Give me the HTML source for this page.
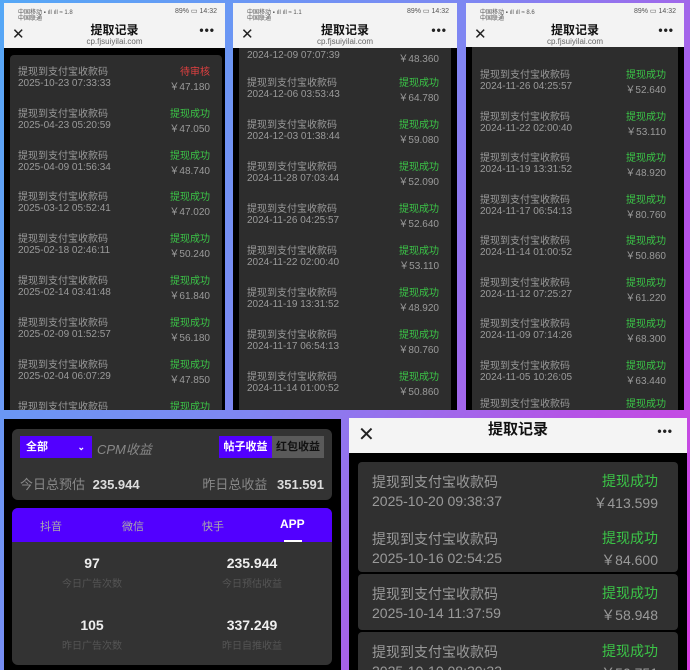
<!DOCTYPE html>
<html><head><meta charset="utf-8"><style>
*{margin:0;padding:0;box-sizing:border-box}
body{width:690px;height:670px;overflow:hidden;position:relative;font-family:"Liberation Sans","Noto Sans CJK SC",sans-serif;background:linear-gradient(120deg,#55a8f6 0%,#7f86f2 45%,#b455e6 75%,#d83ee0 100%)}
.p{position:absolute;background:#000;overflow:hidden}
.hd{position:absolute;left:0;right:0;top:0;background:#f3f3f3}
.sb{position:absolute;top:4px;font-size:6px;color:#555}
.tt{position:absolute;left:0;right:0;top:18px;text-align:center;font-size:12px;font-weight:bold;color:#111}
.url{position:absolute;left:0;right:0;top:34px;text-align:center;font-size:8px;color:#666}
.x{position:absolute;left:8px;top:22px;font-size:15px;color:#222}
.dots{position:absolute;right:10px;top:20px;font-size:12px;font-weight:bold;color:#222;letter-spacing:1px}
.card{position:absolute;background:#2d2d2d;border-radius:4px}
.r{position:absolute;left:0;right:0;font-size:10px;color:#9a9a9a}
.r .a{position:absolute;left:8px;top:0}
.r .s{position:absolute;right:12px;top:0;color:#3bc447}
.r .s.pd{color:#e04040}
.r .d{position:absolute;left:8px;top:15px}
.r .m{position:absolute;right:12px;top:15px}
.big .r{font-size:14px}
.big .r .a{left:14px}.big .r .d{left:14px;top:21px}.big .r .s{right:20px;top:-1px}.big .r .m{right:20px;top:21px}
</style></head><body>

<!-- panel 1 -->
<div class="p" style="left:4px;top:3px;width:221px;height:407px">
<div class="hd" style="height:45px">
<div class="sb" style="left:14px">中国移动 ▪ ıll ıll ≈ 1.8</div><div class="sb" style="left:14px;top:10px">中国联通</div>
<div class="sb" style="right:8px;font-size:7px">89% ▭ 14:32</div>
<div class="x">✕</div><div class="tt">提取记录</div><div class="url">cp.fjsuiyilai.com</div><div class="dots">•••</div></div>
<div class="card" style="left:6px;top:52px;width:212px;height:360px">
<div class="r" style="top:8px"><span class="a">提现到支付宝收款码</span><span class="s pd">待审核</span><span class="d">2025-10-23 07:33:33</span><span class="m">￥47.180</span></div>
<div class="r" style="top:50px"><span class="a">提现到支付宝收款码</span><span class="s">提现成功</span><span class="d">2025-04-23 05:20:59</span><span class="m">￥47.050</span></div>
<div class="r" style="top:92px"><span class="a">提现到支付宝收款码</span><span class="s">提现成功</span><span class="d">2025-04-09 01:56:34</span><span class="m">￥48.740</span></div>
<div class="r" style="top:133px"><span class="a">提现到支付宝收款码</span><span class="s">提现成功</span><span class="d">2025-03-12 05:52:41</span><span class="m">￥47.020</span></div>
<div class="r" style="top:175px"><span class="a">提现到支付宝收款码</span><span class="s">提现成功</span><span class="d">2025-02-18 02:46:11</span><span class="m">￥50.240</span></div>
<div class="r" style="top:217px"><span class="a">提现到支付宝收款码</span><span class="s">提现成功</span><span class="d">2025-02-14 03:41:48</span><span class="m">￥61.840</span></div>
<div class="r" style="top:259px"><span class="a">提现到支付宝收款码</span><span class="s">提现成功</span><span class="d">2025-02-09 01:52:57</span><span class="m">￥56.180</span></div>
<div class="r" style="top:301px"><span class="a">提现到支付宝收款码</span><span class="s">提现成功</span><span class="d">2025-02-04 06:07:29</span><span class="m">￥47.850</span></div>
<div class="r" style="top:343px"><span class="a">提现到支付宝收款码</span><span class="s">提现成功</span></div>
</div></div>

<!-- panel 2 -->
<div class="p" style="left:233px;top:3px;width:224px;height:407px">
<div class="card" style="left:6px;top:30px;width:212px;height:380px">
<div class="r" style="top:2px"><span class="d">2024-12-09 07:07:39</span><span class="m">￥48.360</span></div>
<div class="r" style="top:41px"><span class="a">提现到支付宝收款码</span><span class="s">提现成功</span><span class="d">2024-12-06 03:53:43</span><span class="m">￥64.780</span></div>
<div class="r" style="top:83px"><span class="a">提现到支付宝收款码</span><span class="s">提现成功</span><span class="d">2024-12-03 01:38:44</span><span class="m">￥59.080</span></div>
<div class="r" style="top:125px"><span class="a">提现到支付宝收款码</span><span class="s">提现成功</span><span class="d">2024-11-28 07:03:44</span><span class="m">￥52.090</span></div>
<div class="r" style="top:167px"><span class="a">提现到支付宝收款码</span><span class="s">提现成功</span><span class="d">2024-11-26 04:25:57</span><span class="m">￥52.640</span></div>
<div class="r" style="top:209px"><span class="a">提现到支付宝收款码</span><span class="s">提现成功</span><span class="d">2024-11-22 02:00:40</span><span class="m">￥53.110</span></div>
<div class="r" style="top:251px"><span class="a">提现到支付宝收款码</span><span class="s">提现成功</span><span class="d">2024-11-19 13:31:52</span><span class="m">￥48.920</span></div>
<div class="r" style="top:293px"><span class="a">提现到支付宝收款码</span><span class="s">提现成功</span><span class="d">2024-11-17 06:54:13</span><span class="m">￥80.760</span></div>
<div class="r" style="top:335px"><span class="a">提现到支付宝收款码</span><span class="s">提现成功</span><span class="d">2024-11-14 01:00:52</span><span class="m">￥50.860</span></div>
<div class="r" style="top:377px"><span class="a">提现到支付宝收款码</span><span class="s">提现成功</span></div>
</div>
<div class="hd" style="height:45px">
<div class="sb" style="left:14px">中国移动 ▪ ıll ıll ≈ 1.1</div><div class="sb" style="left:14px;top:10px">中国联通</div>
<div class="sb" style="right:8px;font-size:7px">89% ▭ 14:32</div>
<div class="x">✕</div><div class="tt">提取记录</div><div class="url">cp.fjsuiyilai.com</div><div class="dots">•••</div></div>
</div>

<!-- panel 3 -->
<div class="p" style="left:466px;top:3px;width:218px;height:407px">
<div class="card" style="left:6px;top:30px;width:206px;height:380px">
<div class="r" style="top:33px"><span class="a">提现到支付宝收款码</span><span class="s">提现成功</span><span class="d">2024-11-26 04:25:57</span><span class="m">￥52.640</span></div>
<div class="r" style="top:75px"><span class="a">提现到支付宝收款码</span><span class="s">提现成功</span><span class="d">2024-11-22 02:00:40</span><span class="m">￥53.110</span></div>
<div class="r" style="top:116px"><span class="a">提现到支付宝收款码</span><span class="s">提现成功</span><span class="d">2024-11-19 13:31:52</span><span class="m">￥48.920</span></div>
<div class="r" style="top:158px"><span class="a">提现到支付宝收款码</span><span class="s">提现成功</span><span class="d">2024-11-17 06:54:13</span><span class="m">￥80.760</span></div>
<div class="r" style="top:199px"><span class="a">提现到支付宝收款码</span><span class="s">提现成功</span><span class="d">2024-11-14 01:00:52</span><span class="m">￥50.860</span></div>
<div class="r" style="top:241px"><span class="a">提现到支付宝收款码</span><span class="s">提现成功</span><span class="d">2024-11-12 07:25:27</span><span class="m">￥61.220</span></div>
<div class="r" style="top:282px"><span class="a">提现到支付宝收款码</span><span class="s">提现成功</span><span class="d">2024-11-09 07:14:26</span><span class="m">￥68.300</span></div>
<div class="r" style="top:324px"><span class="a">提现到支付宝收款码</span><span class="s">提现成功</span><span class="d">2024-11-05 10:26:05</span><span class="m">￥63.440</span></div>
<div class="r" style="top:362px"><span class="a">提现到支付宝收款码</span><span class="s">提现成功</span></div>
</div>
<div class="hd" style="height:44px">
<div class="sb" style="left:14px">中国移动 ▪ ıll ıll ≈ 8.6</div><div class="sb" style="left:14px;top:10px">中国联通</div>
<div class="sb" style="right:8px;font-size:7px">89% ▭ 14:32</div>
<div class="x">✕</div><div class="tt">提取记录</div><div class="url">cp.fjsuiyilai.com</div><div class="dots">•••</div></div>
</div>

<!-- bottom left -->
<div class="p" style="left:4px;top:419px;width:337px;height:251px">
<div style="position:absolute;left:8px;top:10px;width:320px;height:71px;background:#333;border-radius:6px">
 <div style="position:absolute;left:8px;top:7px;width:72px;height:22px;background:#5200ff;color:#fff;font-size:11px;font-weight:bold;line-height:22px;padding-left:6px">全部<span style="position:absolute;right:7px;font-size:9px">⌄</span></div>
 <div style="position:absolute;left:85px;top:10px;color:#888;font-size:13px;font-style:italic">CPM收益</div>
 <div style="position:absolute;left:207px;top:7px;width:53px;height:22px;background:#5200ff;color:#fff;font-size:11px;font-weight:bold;line-height:22px;text-align:center">帖子收益</div>
 <div style="position:absolute;left:260px;top:7px;width:52px;height:22px;background:#5a5a5a;color:#111;font-size:11px;font-weight:bold;line-height:22px;text-align:center">红包收益</div>
 <div style="position:absolute;left:8px;top:45px;font-size:13px;color:#888">今日总预估 <b style="color:#ddd;margin-left:4px">235.944</b></div>
 <div style="position:absolute;right:8px;top:45px;font-size:13px;color:#888">昨日总收益 <b style="color:#ddd;margin-left:6px">351.591</b></div>
</div>
<div style="position:absolute;left:8px;top:89px;width:320px;height:157px;background:#333;border-radius:6px;overflow:hidden">
 <div style="position:absolute;left:0;top:0;right:0;height:34px;background:#5200ff"></div>
 <div style="position:absolute;left:28px;top:10px;font-size:11px;color:#aaa">抖音</div>
 <div style="position:absolute;left:110px;top:10px;font-size:11px;color:#aaa">微信</div>
 <div style="position:absolute;left:190px;top:10px;font-size:11px;color:#aaa">快手</div>
 <div style="position:absolute;left:268px;top:9px;font-size:12px;color:#fff;font-weight:bold">APP</div>
 <div style="position:absolute;left:272px;top:32px;width:18px;height:2px;background:#fff"></div>
 <div style="position:absolute;left:20px;width:120px;top:47px;text-align:center;color:#eee;font-size:14px;font-weight:bold">97</div>
 <div style="position:absolute;left:20px;width:120px;top:67px;text-align:center;color:#555;font-size:10px">今日广告次数</div>
 <div style="position:absolute;left:180px;width:120px;top:47px;text-align:center;color:#eee;font-size:14px;font-weight:bold">235.944</div>
 <div style="position:absolute;left:180px;width:120px;top:67px;text-align:center;color:#555;font-size:10px">今日预估收益</div>
 <div style="position:absolute;left:20px;width:120px;top:109px;text-align:center;color:#eee;font-size:14px;font-weight:bold">105</div>
 <div style="position:absolute;left:20px;width:120px;top:129px;text-align:center;color:#555;font-size:10px">昨日广告次数</div>
 <div style="position:absolute;left:180px;width:120px;top:109px;text-align:center;color:#eee;font-size:14px;font-weight:bold">337.249</div>
 <div style="position:absolute;left:180px;width:120px;top:129px;text-align:center;color:#555;font-size:10px">昨日自推收益</div>
</div>
</div>

<!-- bottom right -->
<div class="p big" style="left:349px;top:418px;width:338px;height:252px">
<div class="hd" style="height:35px;background:#f4f4f4">
 <div style="position:absolute;left:9px;top:4px;font-size:20px;color:#222">✕</div>
 <div style="position:absolute;left:0;right:0;top:0;text-align:center;font-size:15px;font-weight:bold;color:#111">提取记录</div>
 <div style="position:absolute;right:14px;top:6px;font-size:12px;font-weight:bold;color:#222;letter-spacing:1px">•••</div>
</div>
<div class="card" style="left:9px;top:44px;width:320px;height:110px;background:#303030">
 <div class="r" style="top:10px"><span class="a">提现到支付宝收款码</span><span class="s">提现成功</span><span class="d">2025-10-20 09:38:37</span><span class="m">￥413.599</span></div>
 <div class="r" style="top:67px"><span class="a">提现到支付宝收款码</span><span class="s">提现成功</span><span class="d">2025-10-16 02:54:25</span><span class="m">￥84.600</span></div>
</div>
<div class="card" style="left:9px;top:156px;width:320px;height:56px;background:#303030">
 <div class="r" style="top:10px"><span class="a">提现到支付宝收款码</span><span class="s">提现成功</span><span class="d">2025-10-14 11:37:59</span><span class="m">￥58.948</span></div>
</div>
<div class="card" style="left:9px;top:214px;width:320px;height:60px;background:#303030">
 <div class="r" style="top:10px"><span class="a">提现到支付宝收款码</span><span class="s">提现成功</span><span class="d">2025-10-10 08:20:33</span><span class="m">￥50.751</span></div>
</div>
</div>

</body></html>
